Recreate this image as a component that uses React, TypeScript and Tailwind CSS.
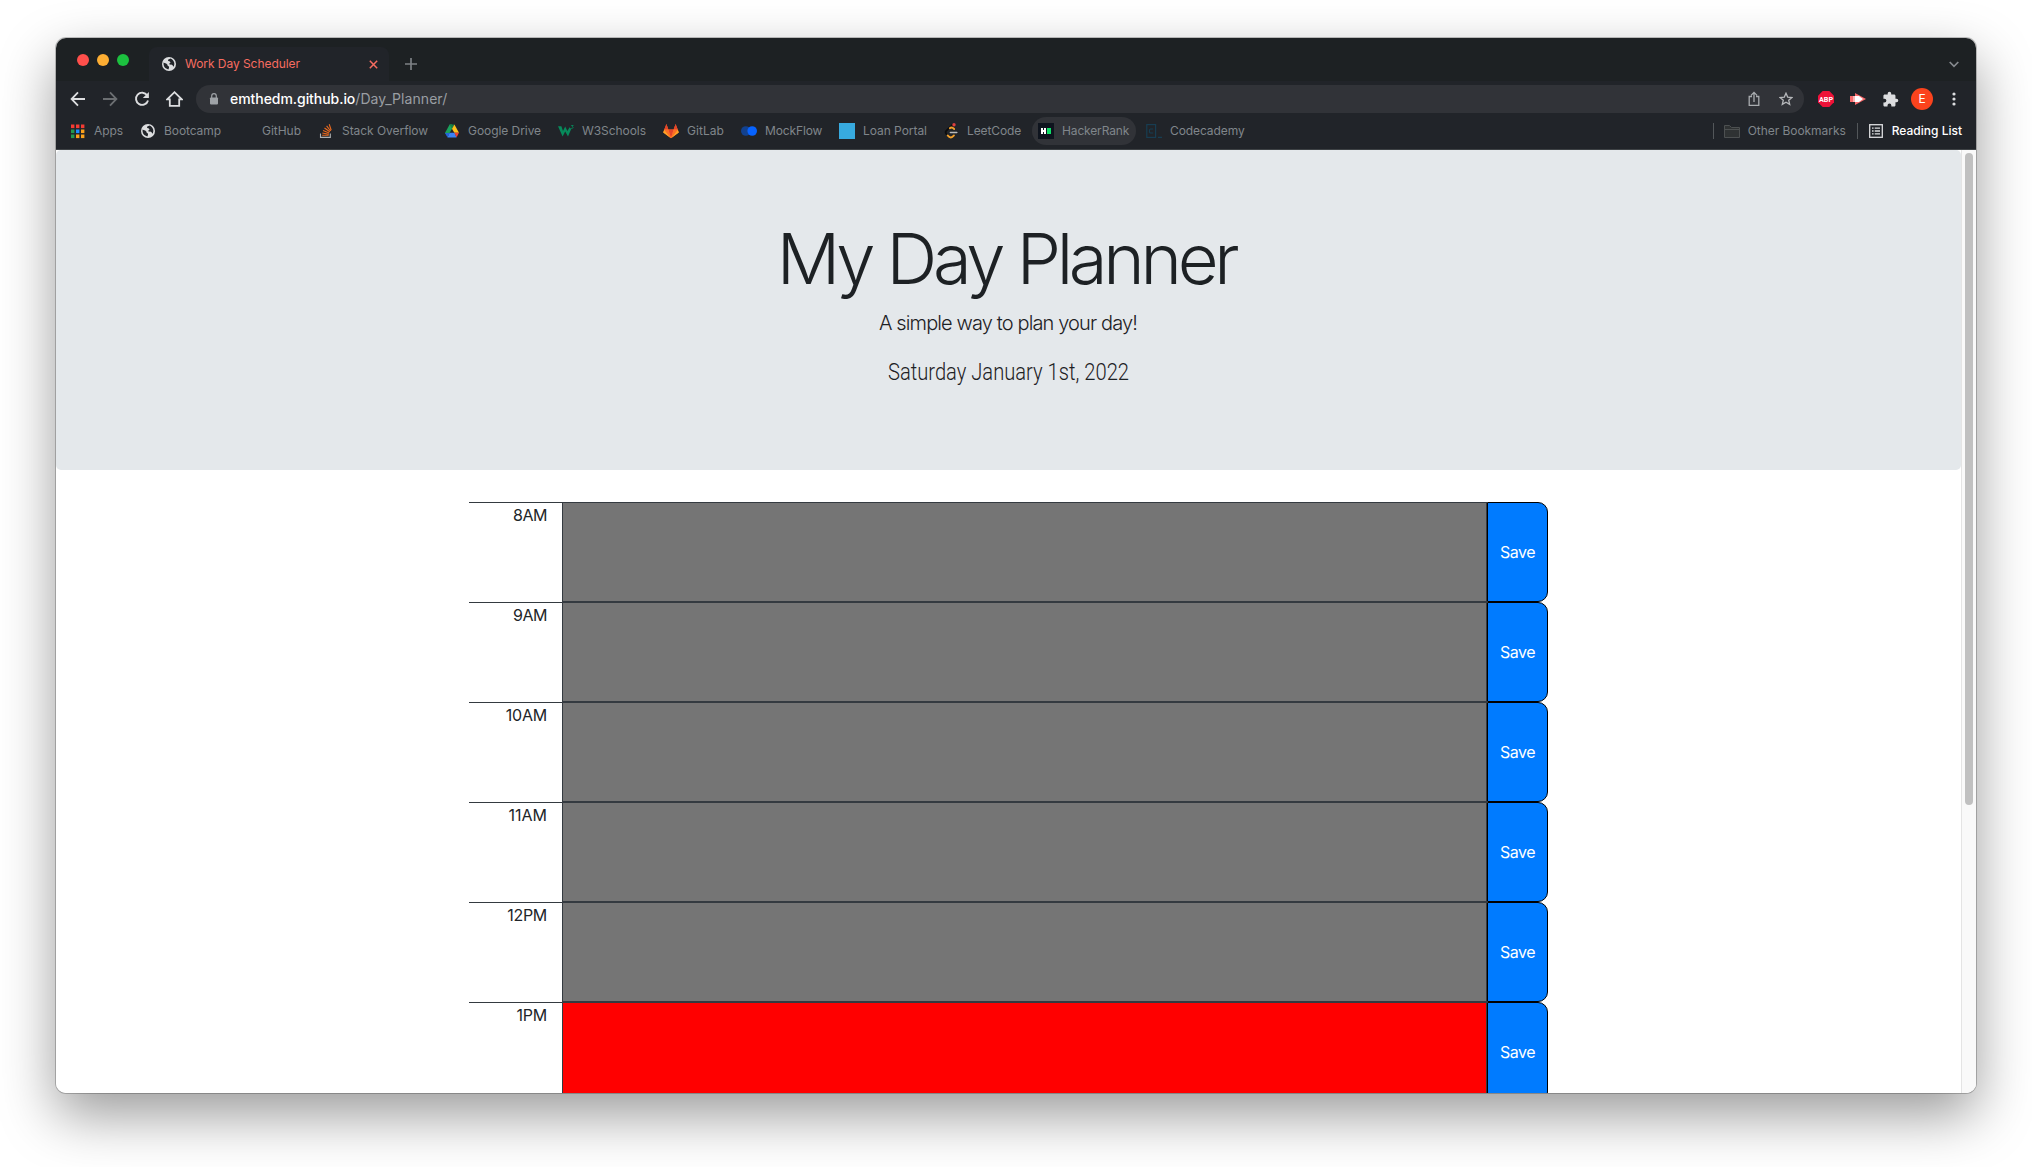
import type { ReactNode } from 'react';

function Globe() {
  return (
    <svg width="14" height="14" viewBox="0 0 14 14">
      <circle cx="7" cy="7" r="7" fill="#dcdddf" />
      <path d="M1.6 5.600C2.800 6.600 4 6.200 5 7.200 5.800 8 5.400 8.800 6.600 9.200 7.400 9.600 7.200 10.800 6.400 12.400 3.400 12 1 9.400 1.600 5.600Z" fill="#212429" />
      <path d="M8.400 1.600C7.200 2.200 6 2.400 6 3.600 6.200 4.600 8 4 8.400 5.200 8.600 6.400 6.800 6.200 7.200 7.200 8.200 8 9.800 7.200 10.600 8.200 11 9 11.200 9.600 11.400 9.800 12.400 8.400 12.600 6.600 12 5 11.200 3.200 10 2 8.400 1.600Z" fill="#212429" />
    </svg>
  );
}

function AppsIcon() {
  const c = ['#f53b33', '#f53b33', '#f53b33', '#23994e', '#1a8cff', '#fba11b', '#23994e', '#fba11b', '#fba11b'];
  return (
    <svg width="16" height="16" viewBox="0 0 16 16">
      {c.map((f, i) => (
        <rect key={i} x={1 + (i % 3) * 5} y={1.5 + Math.floor(i / 3) * 5} width="3.4" height="3.6" fill={f} />
      ))}
    </svg>
  );
}

const StackOverflow = () => (
  <svg width="16" height="16" viewBox="0 0 16 16" fill="none" strokeWidth="1.1">
    <path d="M2.5 10.5V14.4H12.3V10.5" stroke="#aeb1b3" />
    <path d="M4.2 12.3H10.7M4.3 10 10.8 11.2M5 7.6 11.2 10M6.5 5 11.8 8.8M8.6 2.8 12.6 8M11.2 1.3 13.2 7.2" stroke="#e9691f" />
  </svg>
);

const Drive = () => (
  <svg width="16" height="16" viewBox="0 0 16 16">
    <path d="M5.6 1.6H8L8 5.8 3.6 13.6 1 10Z" fill="#1aa15c" />
    <path d="M8 5.8 5.6 1.6H10.4Z" fill="#148044" />
    <path d="M8 5.8 10.4 1.6 15 9.8H10.3Z" fill="#fdc01c" />
    <path d="M5.6 9.8H10.6L12.6 14.4H3.4Z" fill="#3b82f6" />
    <path d="M1 10H5.6L3.4 14.2Z" fill="#2563d9" />
    <path d="M10.3 9.8H15L12.6 14.2Z" fill="#ea4335" />
  </svg>
);

const W3 = () => (
  <svg width="16" height="16" viewBox="0 0 16 16">
    <path d="M0 3.2H3.4L5 8 7.200 3.600 9.400 8 11.600 4.200 13.200 6 10 13.400 7.200 8.600 4.600 13.400Z" fill="#078a5b" />
    <path d="M13.2 2.500H15.200L14.200 3.700C15.600 3.800 15.400 5.700 13.200 5.400" fill="none" stroke="#078a5b" strokeWidth="0.9" />
  </svg>
);

const GitLab = () => (
  <svg width="16" height="16" viewBox="0 0 16 16">
    <path d="M3.4 1 5.4 6.6H10.6L12.6 1 15.8 9.4 8 15.2.2 9.4Z" fill="#fc6d26" />
    <path d="M5.4 6.6H10.6L8 15.2ZM3.4 1 5.4 6.6H1.2ZM12.6 1 14.8 6.6H10.6Z" fill="#e2432a" />
    <path d="M1.2 6.6.2 9.4 8 15.2ZM14.8 6.6 15.8 9.4 8 15.2Z" fill="#fca326" />
    <path d="M1.2 6.6H5.4L8 15.2ZM14.8 6.6H10.6L8 15.2Z" fill="#fc6d26" />
  </svg>
);

const MockFlow = () => (
  <svg width="16" height="16" viewBox="0 0 16 16">
    <circle cx="4.8" cy="8" r="4.8" fill="#12418f" />
    <circle cx="11.2" cy="8" r="4.8" fill="#0763ff" />
  </svg>
);

const LeetCode = () => (
  <svg width="16" height="16" viewBox="0 0 16 16" fill="none" strokeWidth="1.8" strokeLinecap="round">
    <path d="M9.2 2.2 3 8.2C2 9.4 2.4 10.4 4.4 12.4" stroke="#0b0c0d" />
    <path d="M6.8 5.2C8.4 3.8 9.6 4.4 11.2 6M4.6 12.4C7 15.4 8.8 15 11 12.4" stroke="#f2a02b" />
    <path d="M7.4 9.4H13.8" stroke="#b9bbbd" strokeWidth="1.5" />
    <circle cx="11" cy="1.8" r="1.7" fill="#dc3f3f" />
  </svg>
);

const HackerRank = () => (
  <svg width="16" height="16" viewBox="0 0 16 16">
    <rect width="16" height="16" fill="#0e141e" />
    <path d="M3 5H5V7H6V5H8V11H6V9H5V11H3Z" fill="#fff" />
    <rect x="9" y="5" width="4" height="6" fill="#10e068" />
  </svg>
);

const Codecademy = () => (
  <svg width="16" height="16" viewBox="0 0 16 16" fill="none" stroke="#173d52" strokeWidth="1.2">
    <rect x=".8" y="1.6" width="8.8" height="12.8" />
    <path d="M7.2 6H4.4C3.6 6 3.4 6.6 3.4 8S3.6 10 4.4 10H7.2M12 14.4H16" />
  </svg>
);

const bookmarks: { name: string; icon: ReactNode; size: string }[] = [
  { name: 'Apps', icon: <AppsIcon />, size: 'w-[70px] tracking-[-0.08px]' },
  { name: 'Bootcamp', icon: <Globe />, size: 'w-[98px] tracking-[-0.08px]' },
  { name: 'GitHub', icon: null, size: 'w-[80px] tracking-[-0.02px]' },
  { name: 'Stack Overflow', icon: <StackOverflow />, size: 'w-[126px] tracking-[-0.05px]' },
  { name: 'Google Drive', icon: <Drive />, size: 'w-[114px] tracking-[-0.06px]' },
  { name: 'W3Schools', icon: <W3 />, size: 'w-[105px] tracking-[-0.06px]' },
  { name: 'GitLab', icon: <GitLab />, size: 'w-[78px] tracking-[0.06px]' },
  { name: 'MockFlow', icon: <MockFlow />, size: 'w-[98px] tracking-[-0.12px]' },
  { name: 'Loan Portal', icon: <div className="size-4 bg-[#37aadf]" />, size: 'w-[104px] tracking-[-0.04px]' },
  { name: 'LeetCode', icon: <LeetCode />, size: 'w-[95px] tracking-[-0.1px]' },
  { name: 'HackerRank', icon: <HackerRank />, size: 'w-[104px] mr-1 rounded-full bg-[#313338] tracking-[-0.14px]' },
  { name: 'Codecademy', icon: <Codecademy />, size: 'w-[110px] tracking-[-0.09px]' },
];

const hours = [
  { label: '8AM', color: 'bg-[#757575]', tracking: 'tracking-[-0.5px]' },
  { label: '9AM', color: 'bg-[#757575]', tracking: 'tracking-[-0.5px]' },
  { label: '10AM', color: 'bg-[#757575]', tracking: 'tracking-[-0.2px]' },
  { label: '11AM', color: 'bg-[#757575]', tracking: 'tracking-[0px]' },
  { label: '12PM', color: 'bg-[#757575]', tracking: 'tracking-[-0.3px]' },
  { label: '1PM', color: 'bg-[#ff0000]', tracking: 'tracking-[-0.2px]' },
];

function Cell({ children }: { children: ReactNode }) {
  return <div className="flex h-7 w-8 shrink-0 items-center justify-center">{children}</div>;
}

function TabStrip() {
  return (
    <div className="flex h-[43px] bg-[#1d2123]">
      <div className="flex h-11 w-[93px] items-center gap-2 pl-[21px]">
        <div className="size-3 rounded-full bg-[#ff4f4b]" />
        <div className="size-3 rounded-full bg-[#fdae33]" />
        <div className="size-3 rounded-full bg-[#1cc13f]" />
      </div>
      <div className="mt-[9px] flex w-[240px] items-center rounded-t-lg bg-[#212429] pl-[13px]">
        <Globe />
        <span className="ml-[9px] flex-1 text-xs tracking-[-0.05px] text-[#f76c60]">Work Day Scheduler</span>
        <svg className="mr-[11px]" width="9" height="9" viewBox="0 0 9 9" stroke="#f76c60" strokeWidth="1.5">
          <path d="M.8.8 8.2 8.2M8.2.8.8 8.2" />
        </svg>
      </div>
      <svg className="mt-5 ml-4" width="12" height="12" viewBox="0 0 12 12" stroke="#7d8185" strokeWidth="1.7">
        <path d="M6 0V12M0 6H12" />
      </svg>
      <svg className="mt-[23px] mr-[17px] ml-auto" width="10" height="7" viewBox="0 0 10 7" fill="none" stroke="#85898d" strokeWidth="1.7">
        <path d="M.7 1 5 5.3 9.3 1" />
      </svg>
    </div>
  );
}

function Toolbar() {
  return (
    <div className="flex h-9 items-center bg-[#212429] pr-[6px] pl-[6px]">
      <Cell>
        <svg width="16" height="16" viewBox="0 0 16 16" fill="none" stroke="#dcdddf" strokeWidth="1.8">
          <path d="M15 8H2.2M8 1.4 1.6 8 8 14.6" />
        </svg>
      </Cell>
      <Cell>
        <svg width="16" height="16" viewBox="0 0 16 16" fill="none" stroke="#6b6e71" strokeWidth="1.8">
          <path d="M1 8H13.8M8 1.4 14.4 8 8 14.6" />
        </svg>
      </Cell>
      <Cell>
        <svg width="16" height="16" viewBox="0 0 16 16" fill="none" stroke="#dcdddf" strokeWidth="1.9">
          <path d="M13.2 4.4A6.1 6.1 0 1 0 14 9.4" />
          <path d="M14.9.9V7H8.8Z" fill="#dcdddf" stroke="none" />
        </svg>
      </Cell>
      <Cell>
        <svg width="17" height="16" viewBox="0 0 17 16" fill="none" stroke="#dcdddf" strokeWidth="1.8">
          <path d="M1.2 8.4H3.8V14.9H13.2V8.4H15.8L8.500 1.200Z" />
        </svg>
      </Cell>
      <div className="ml-[6px] flex h-7 flex-1 items-center rounded-full bg-[#313338] pl-[13px]">
        <svg width="10" height="12" viewBox="0 0 10 12">
          <rect x="1" y="4.4" width="8" height="7" rx=".8" fill="#9ea2a6" />
          <path d="M2.7 5V3A2.3 2.3 0 0 1 7.3 3V5" fill="none" stroke="#9ea2a6" strokeWidth="1.2" />
        </svg>
        <span className="ml-[11px] text-sm font-medium tracking-[-0.05px] text-white">emthedm.github.io</span>
        <span className="flex-1 text-sm tracking-[0.07px] text-[#9a9ea3]">/Day_Planner/</span>
        <Cell>
          <svg width="12" height="16" viewBox="0 0 12 16" fill="none" stroke="#a9acaf" strokeWidth="1.3">
            <path d="M4 5.5H1.2V14.4H10.8V5.5H8M6 11V1.6M3 4.4 6 1.4 9 4.4" />
          </svg>
        </Cell>
        <Cell>
          <svg width="14" height="14" viewBox="0 0 14 14" fill="none" stroke="#b5b7ba" strokeWidth="1.3">
            <path d="M7 1.2 8.7 5.1 12.9 5.5 9.7 8.2 10.7 12.4 7 10.2 3.3 12.4 4.3 8.2 1.1 5.5 5.3 5.1Z" />
          </svg>
        </Cell>
        <div className="w-[2px]" />
      </div>
      <div className="ml-[6px] flex">
        <Cell>
          <svg width="16" height="16" viewBox="0 0 16 16">
            <path d="M4.7 0H11.3L16 4.7V11.3L11.3 16H4.7L0 11.3V4.7Z" fill="#ee1238" />
            <text x="8" y="10.9" textAnchor="middle" textLength="14" lengthAdjust="spacingAndGlyphs" fontFamily="Roboto" fontWeight="700" fontSize="8" fill="#fff">ABP</text>
          </svg>
        </Cell>
        <Cell>
          <svg width="16" height="12" viewBox="0 0 16 12">
            <path d="M0 3H5V9H0Z" fill="#f8696b" />
            <path d="M5 0 16 6 5 12Z" fill="#f8696b" />
            <path d="M5 3H9L13 6 9 9H5Z" fill="#fff" />
            <path d="M3 3H5V9H3Z" fill="#fbb3b3" />
          </svg>
        </Cell>
        <Cell>
          <svg width="17" height="17" viewBox="0 0 24 24" fill="#dcdddf">
            <path d="M20.5 11H19V7c0-1.1-.9-2-2-2h-4V3.5a2.5 2.5 0 0 0-5 0V5H4c-1.1 0-2 .9-2 2v3.8h1.5a2.7 2.7 0 0 1 0 5.4H2V20c0 1.1.9 2 2 2h3.8v-1.5a2.7 2.7 0 0 1 5.4 0V22H17c1.1 0 2-.9 2-2v-4h1.5a2.5 2.5 0 0 0 0-5z" />
          </svg>
        </Cell>
        <Cell>
          <div className="flex size-[22px] items-center justify-center rounded-full bg-[#fb431d] text-xs text-white">E</div>
        </Cell>
        <Cell>
          <svg width="4" height="14" viewBox="0 0 4 14" fill="#dcdddf">
            <circle cx="2" cy="2" r="1.6" />
            <circle cx="2" cy="7" r="1.6" />
            <circle cx="2" cy="12" r="1.6" />
          </svg>
        </Cell>
      </div>
    </div>
  );
}

function BookmarksBar() {
  return (
    <div className="flex h-[33px] items-start border-b border-[#3e4245] bg-[#212429] pl-2 text-xs text-[#80868b]">
      {bookmarks.map((b) => (
        <div key={b.name} className={`flex h-7 shrink-0 items-center whitespace-nowrap ${b.size}`}>
          <div className="mr-2 ml-[6px] flex w-4 justify-center">{b.icon}</div>
          {b.name}
        </div>
      ))}
      <div className="ml-auto flex h-7 items-center pr-[14px]">
        <div className="mr-[10px] h-4 w-px bg-[#53575a]" />
        <svg className="mr-2" width="16" height="13" viewBox="0 0 16 13" fill="#2f3233" stroke="#4d5051">
          <path d="M.5.5H5.5L7.5 2.5H15.5V12.5H.5ZM.5 4.5H15.5" />
        </svg>
        <span className="tracking-[-0.05px]">Other Bookmarks</span>
        <div className="mr-[11px] ml-[11px] h-4 w-px bg-[#53575a]" />
        <svg className="mr-[9px]" width="14" height="14" viewBox="0 0 14 14" fill="none" stroke="#dcdddf" strokeWidth="1.3">
          <rect x=".7" y=".7" width="12.6" height="12.6" />
          <path d="M3 4.2H4.6M3 7H4.6M3 9.8H4.6M5.7 4.2H11M5.7 7H11M5.7 9.8H11" />
        </svg>
        <span className="font-medium text-white">Reading List</span>
      </div>
    </div>
  );
}

function Planner() {
  return (
    <div className="min-w-0 flex-1">
      <header className="flex h-80 flex-col items-center rounded-[5px] bg-[#e4e8eb] pt-[66px] text-[#1d2124]">
        <h1 className="pr-[5px] text-[70.5px] leading-[86px] font-[340] tracking-[-4.3px] whitespace-nowrap">My Day Planner</h1>
        <p className="mt-[6px] pr-px text-xl leading-[30px] font-[350] tracking-[-0.87px]">A simple way to plan your day!</p>
        <p className="mt-[19px] origin-center scale-x-[0.84] font-[Roboto] text-2xl leading-[30px] font-[350]">Saturday January 1st, 2022</p>
      </header>
      <main className="mt-8 ml-[413px] w-[1079px]">
        {hours.map((h) => (
          <div key={h.label} className="flex h-[100px]">
            <div className={`w-[93px] border-t border-[#343a40] pr-[15px] text-right text-base leading-6 text-[#212529] ${h.tracking}`}>{h.label}</div>
            <div className={`flex-1 border border-[#343a40] ${h.color}`} />
            <button className="w-[61px] rounded-r-[10px] border border-black bg-[#007bff] text-base tracking-[-0.5px] text-white">Save</button>
          </div>
        ))}
      </main>
    </div>
  );
}

export default function App() {
  return (
    <div className="h-[1167px] w-[2032px] overflow-hidden bg-white px-14 pt-[38px] font-[Inter,sans-serif]">
      <div className="flex h-[1055px] flex-col overflow-hidden rounded-[10px] bg-white shadow-[0_0_0_1px_rgba(0,0,0,0.22),0_22px_55px_rgba(0,0,0,0.4)]">
        <TabStrip />
        <Toolbar />
        <BookmarksBar />
        <div className="flex min-h-0 flex-1 bg-white">
          <Planner />
          <div className="w-[15px] border-l border-[#e4e4e4] bg-[#f9f9f9] pt-[3px] pl-[3px]">
            <div className="h-[652px] w-2 rounded-full bg-[#c0c0c0]" />
          </div>
        </div>
      </div>
    </div>
  );
}
